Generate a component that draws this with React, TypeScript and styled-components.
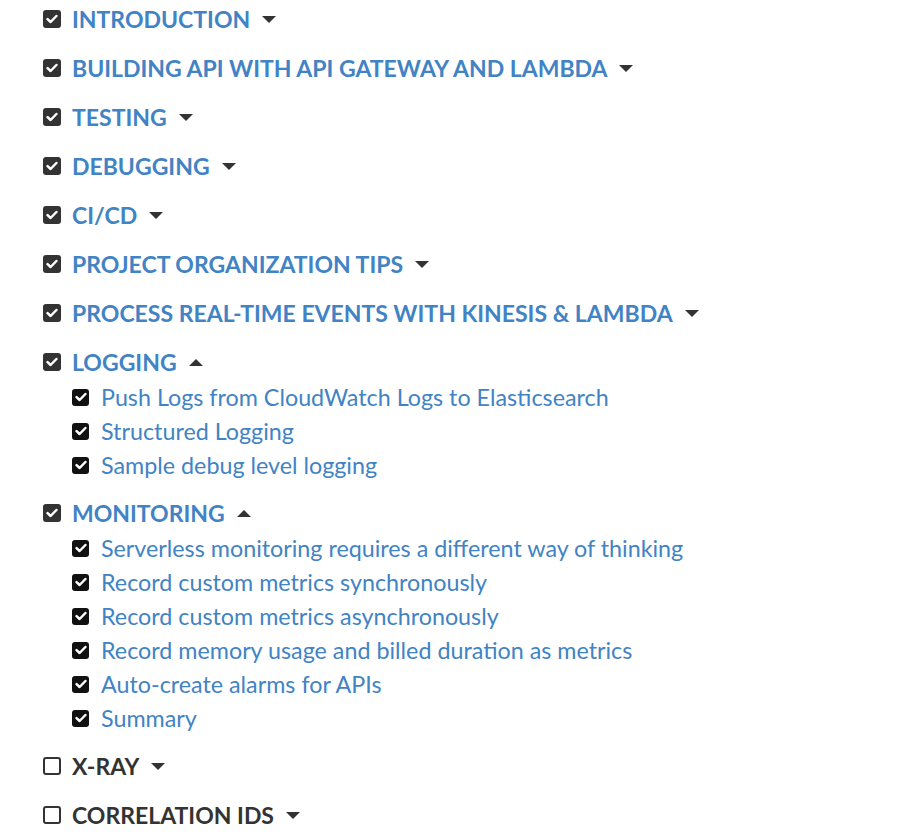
import React from "react";
import styled, { createGlobalStyle } from "styled-components";

const GlobalStyle = createGlobalStyle`
    body {
        margin: 0;
        background: #ffffff;
        font-family: 'Lato', 'Liberation Sans', sans-serif;
    }
`

const Outline = styled.div`
    display: flex;
    flex-direction: column;
    gap: 13px;
    padding: 1px 0 0 43px;
`

const Section = styled.div`
    display: flex;
    flex-direction: column;
`

const HeaderRow = styled.div`
    display: flex;
    flex-direction: row;
    align-items: center;
    height: 36px;
    gap: 11px;
`

const Title = styled.span<{ $done: boolean }>`
    font-size: 23px;
    font-weight: 700;
    color: ${p => (p.$done ? "#4183c4" : "#333333")};
    white-space: nowrap;
`

const Caret = styled.span<{ $open: boolean }>`
    width: 0;
    height: 0;
    margin-left: 1px;
    border-left: 7px solid transparent;
    border-right: 7px solid transparent;
    ${p => (p.$open ? "border-bottom: 7px solid #333;" : "border-top: 7px solid #333;")}
`

const SubList = styled.div`
    display: flex;
    flex-direction: column;
    padding-left: 29px;
`

const SubRow = styled.div`
    display: flex;
    flex-direction: row;
    align-items: center;
    height: 34px;
    gap: 12px;
`

const SubTitle = styled.span`
    font-size: 23.3px;
    color: #4183c4;
    white-space: nowrap;
`

const Box = styled.span<{ $color: string; $size: number }>`
    display: flex;
    align-items: center;
    justify-content: center;
    width: ${p => p.$size}px;
    height: ${p => p.$size}px;
    border-radius: 3px;
    background: ${p => p.$color};
    flex-shrink: 0;
`

const EmptyBox = styled.span`
    width: 14px;
    height: 14px;
    border: 2px solid #333;
    border-radius: 3px;
    flex-shrink: 0;
`

const Check = () => (
    <svg width="12" height="10" viewBox="0 0 12 10">
        <path d="M1.6 5.2 L4.6 8 L10.4 2" fill="none" stroke="#fff" strokeWidth="2.5" strokeLinecap="round" strokeLinejoin="round" />
    </svg>
)

interface OutlineSection {
    title: string;
    done: boolean;
    open?: boolean;
    items?: string[];
}

const sections: OutlineSection[] = [
    { title: "INTRODUCTION", done: true },
    { title: "BUILDING API WITH API GATEWAY AND LAMBDA", done: true },
    { title: "TESTING", done: true },
    { title: "DEBUGGING", done: true },
    { title: "CI/CD", done: true },
    { title: "PROJECT ORGANIZATION TIPS", done: true },
    { title: "PROCESS REAL-TIME EVENTS WITH KINESIS & LAMBDA", done: true },
    {
        title: "LOGGING", done: true, open: true, items: [
            "Push Logs from CloudWatch Logs to Elasticsearch",
            "Structured Logging",
            "Sample debug level logging",
        ]
    },
    {
        title: "MONITORING", done: true, open: true, items: [
            "Serverless monitoring requires a different way of thinking",
            "Record custom metrics synchronously",
            "Record custom metrics asynchronously",
            "Record memory usage and billed duration as metrics",
            "Auto-create alarms for APIs",
            "Summary",
        ]
    },
    { title: "X-RAY", done: false },
    { title: "CORRELATION IDS", done: false },
]

export default function App() {
    return (
        <>
            <GlobalStyle />
            <Outline>
                {sections.map(s => (
                    <Section key={s.title}>
                        <HeaderRow>
                            {s.done ? <Box $color="#333333" $size={18}><Check /></Box> : <EmptyBox />}
                            <Title $done={s.done}>{s.title}</Title>
                            <Caret $open={!!s.open} />
                        </HeaderRow>
                        {s.open && s.items && (
                            <SubList>
                                {s.items.map(item => (
                                    <SubRow key={item}>
                                        <Box $color="#111111" $size={17}><Check /></Box>
                                        <SubTitle>{item}</SubTitle>
                                    </SubRow>
                                ))}
                            </SubList>
                        )}
                    </Section>
                ))}
            </Outline>
        </>
    )
}
